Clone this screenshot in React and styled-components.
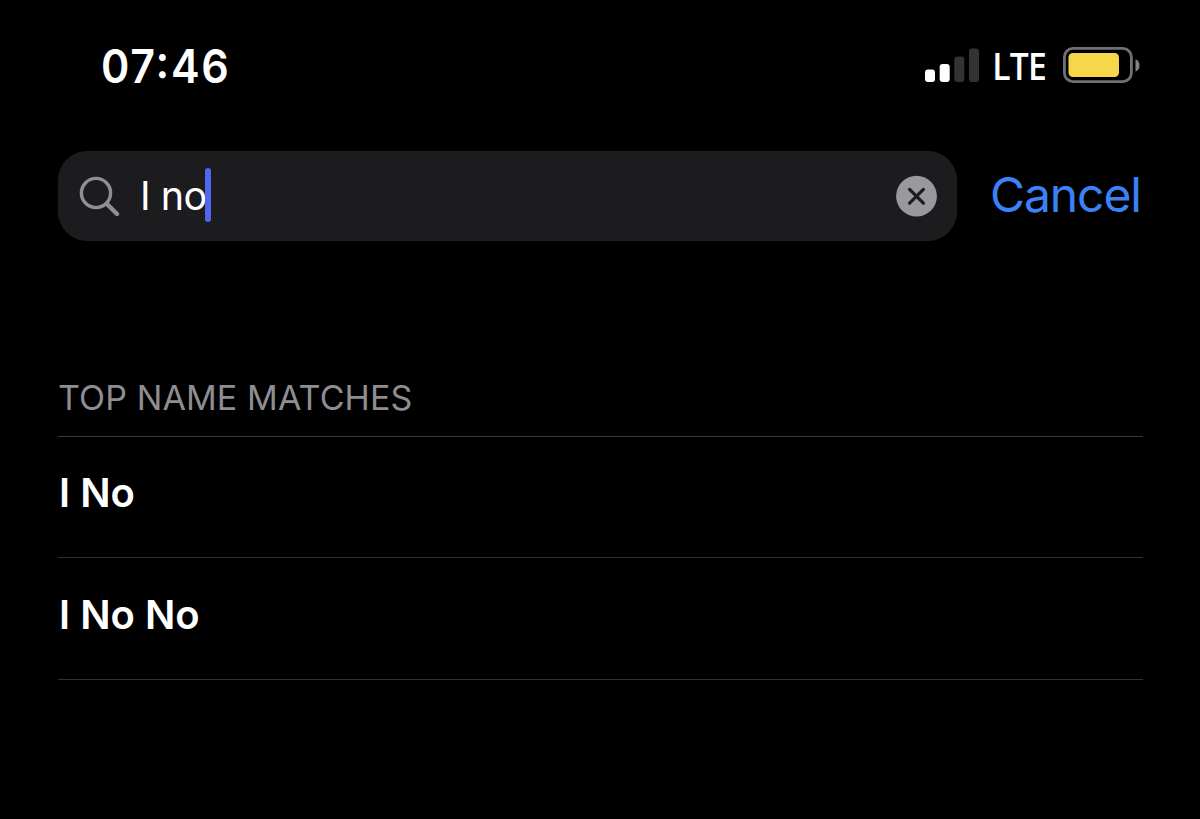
import styled, { createGlobalStyle } from "styled-components";

const GlobalStyle = createGlobalStyle`
  * {
    box-sizing: border-box;
  }

  body {
    margin: 0;
    background: #000;
    font-family: Inter, "Liberation Sans", sans-serif;
    -webkit-font-smoothing: antialiased;
  }
`;

const Screen = styled.main`
  width: 1200px;
  height: 819px;
  padding: 0 57px 0 58px;
  overflow: hidden;
  background: #000;
  color: #fff;
`;

const StatusBar = styled.header`
  display: flex;
  justify-content: space-between;
  align-items: center;
  height: 131px;
  padding: 0 3px 0 43px;
`;

const Time = styled.div`
  font-size: 46px;
  font-weight: 600;
  line-height: 56px;
  letter-spacing: 1.9px;
  font-feature-settings: "calt", "case";
  transform: scaleX(0.935);
  transform-origin: left;
`;

const Indicators = styled.div`
  display: flex;
  align-items: center;
`;

const Network = styled.span`
  width: 52px;
  margin: 1px 17px 0 15px;
  font-family: "Open Sans", Inter, sans-serif;
  font-size: 37px;
  font-weight: 600;
  line-height: 44px;
  letter-spacing: -0.8px;
  text-indent: -2px;
  transform: scaleX(0.91);
  transform-origin: left;
`;

const SearchRow = styled.div`
  display: flex;
  align-items: center;
  margin-top: 20px;
`;

const SearchField = styled.div`
  display: flex;
  align-items: center;
  width: 899px;
  height: 90px;
  padding: 0 20px 0 20px;
  border-radius: 29px;
  background: #1c1c1e;
`;

const Query = styled.span`
  margin: 0 -2px 0 20px;
  font-size: 39.5px;
  line-height: 54px;
  letter-spacing: -0.5px;
`;

const Caret = styled.span`
  width: 6px;
  height: 54px;
  margin: 0 auto 2px 0;
  border-radius: 3px;
  background: #4e67ee;
`;

const ClearButton = styled.button`
  display: flex;
  padding: 0;
  border: none;
  background: none;
`;

const CancelButton = styled.button`
  margin: 0 0 2px 33px;
  padding: 0;
  border: none;
  background: none;
  color: #3b82f7;
  font-family: inherit;
  font-size: 48px;
  line-height: 58px;
  letter-spacing: -1.1px;
  white-space: nowrap;
`;

const Heading = styled.h2`
  margin: 136px 0 0;
  padding-bottom: 17px;
  border-bottom: 1px solid #38383a;
  color: #8d8d93;
  font-size: 34px;
  font-weight: 400;
  line-height: 42px;
  letter-spacing: 0.12px;
`;

const Matches = styled.ul`
  margin: 0;
  padding: 0;
  list-style: none;
`;

const Match = styled.li`
  height: 121.3px;
  padding: 31.4px 0 0 1px;
  border-bottom: 1px solid #303032;
  font-size: 40px;
  font-weight: 600;
  line-height: 50px;
`;

const SignalIcon = () => (
  <svg width="54" height="36" viewBox="0 0 54 36">
    <rect x="0" y="21.5" width="10" height="12.5" rx="3" fill="#fff" />
    <rect x="14.7" y="16" width="10" height="18" rx="3" fill="#fff" />
    <rect x="29.3" y="8.5" width="10" height="25.5" rx="3" fill="#333" />
    <rect x="44" y="0.5" width="10" height="33.5" rx="3" fill="#333" />
  </svg>
);

const BatteryIcon = () => (
  <svg width="77" height="37" viewBox="0 0 77 37">
    <rect
      x="1.4"
      y="1.4"
      width="67"
      height="33.2"
      rx="8.5"
      fill="none"
      stroke="#717173"
      strokeWidth="2.8"
    />
    <rect x="5.5" y="6" width="50.5" height="24" rx="4.5" fill="#f7d64a" />
    <path d="M72.5 12.2a6.8 6.8 0 0 1 0 12.4z" fill="#838385" />
  </svg>
);

const SearchIcon = () => (
  <svg width="42" height="42" viewBox="0 0 42 42" fill="none" stroke="#8f8f95">
    <circle cx="18" cy="18" r="14.6" strokeWidth="3.4" />
    <path d="M28.7 28.7L39 39" strokeWidth="4.4" strokeLinecap="round" />
  </svg>
);

const ClearIcon = () => (
  <svg width="42" height="42" viewBox="0 0 42 42">
    <circle cx="21.5" cy="21.2" r="20.4" fill="#98989f" />
    <path
      d="M14.6 14.4l13.8 13.8M28.4 14.4L14.6 28.2"
      stroke="#1c1c1e"
      strokeWidth="3.2"
      strokeLinecap="round"
    />
  </svg>
);

const matches = ["I No", "I No No"];

const App = () => {
  return (
    <>
      <GlobalStyle />
      <Screen>
        <StatusBar>
          <Time>07:46</Time>
          <Indicators>
            <SignalIcon />
            <Network>LTE</Network>
            <BatteryIcon />
          </Indicators>
        </StatusBar>
        <SearchRow>
          <SearchField>
            <SearchIcon />
            <Query>I no</Query>
            <Caret />
            <ClearButton aria-label="Clear">
              <ClearIcon />
            </ClearButton>
          </SearchField>
          <CancelButton>Cancel</CancelButton>
        </SearchRow>
        <Heading>TOP NAME MATCHES</Heading>
        <Matches>
          {matches.map((name) => (
            <Match key={name}>{name}</Match>
          ))}
        </Matches>
      </Screen>
    </>
  );
};

export default App;
